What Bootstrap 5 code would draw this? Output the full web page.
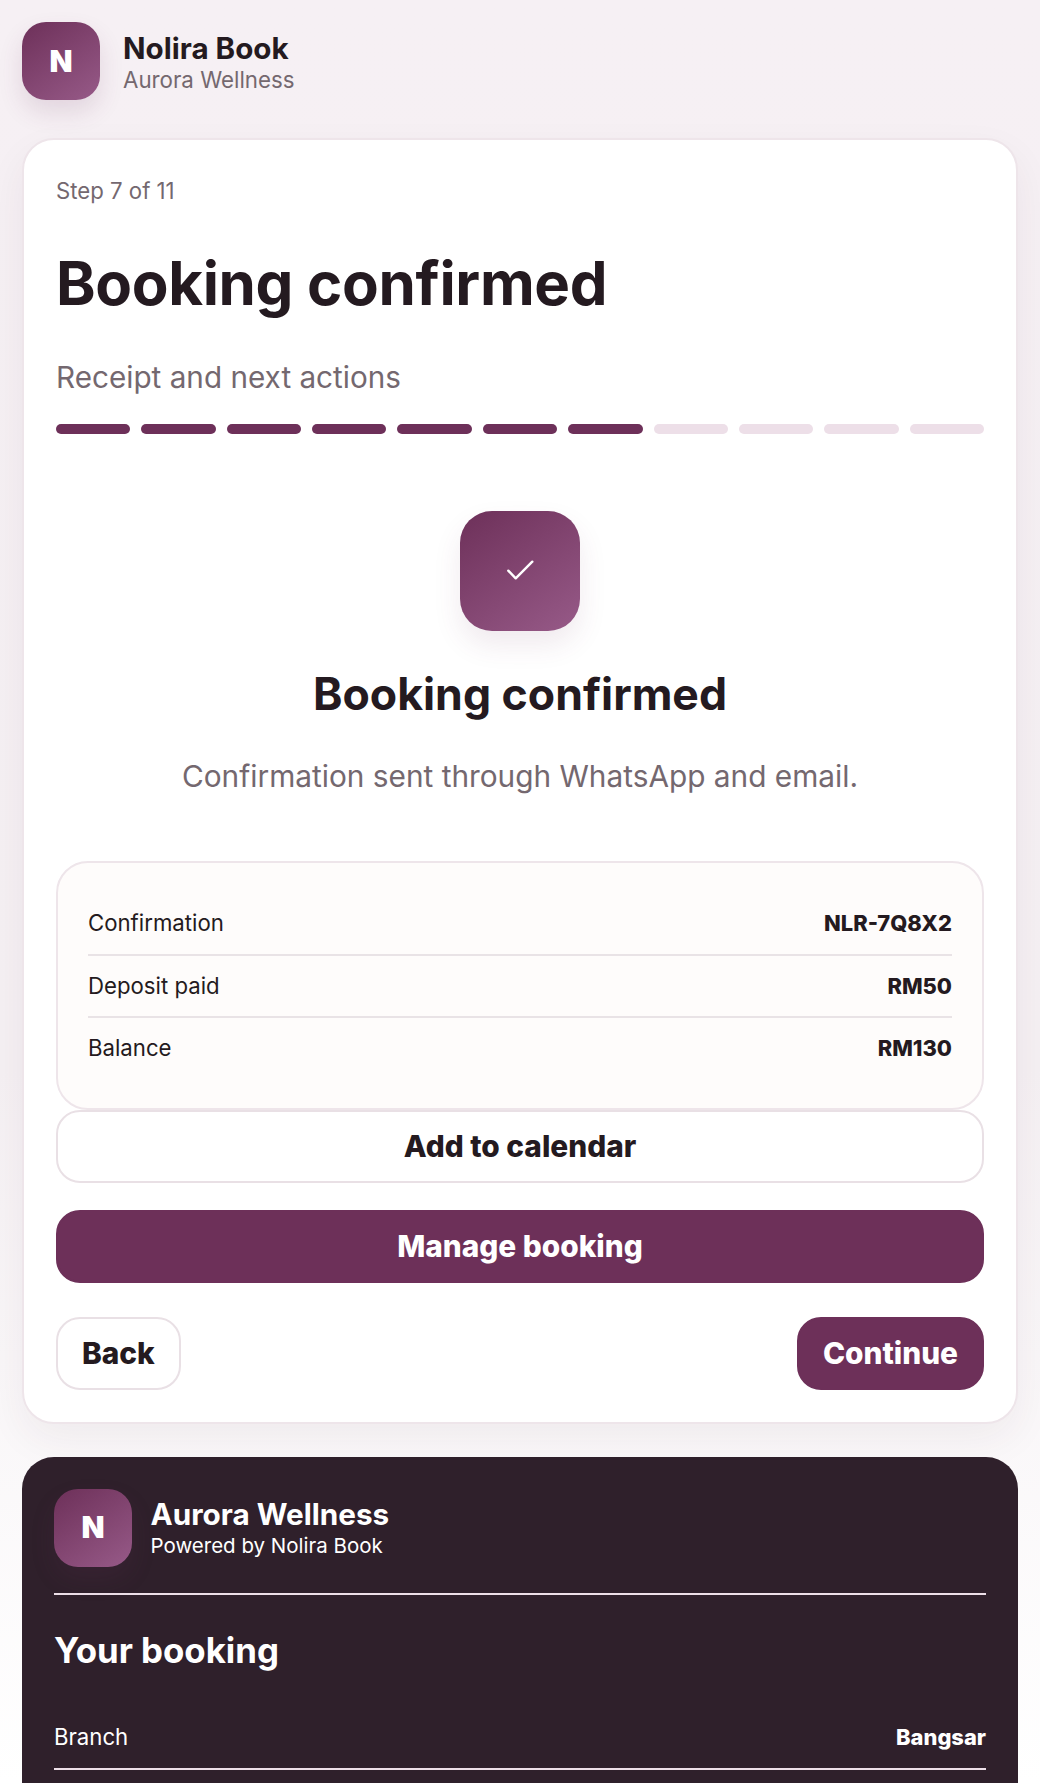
<!DOCTYPE html>
<html lang="en">
<head>
    <meta charset="UTF-8">
    <meta name="viewport" content="width=device-width, initial-scale=1.0">
    <title>Nolira Book - Booking confirmed</title>
    <link href="https://cdn.jsdelivr.net/npm/bootstrap@5.3.0/dist/css/bootstrap.min.css" rel="stylesheet">
    <style>
        html, body {
            height: 1783px;
            overflow: hidden;
        }
        body {
            font-family: Inter, "Liberation Sans", sans-serif;
            color: #241a20;
            background: linear-gradient(180deg, #f6f0f4 0%, #f5f0f3 60%, #ffffff 100%);
        }
        .page-wrap {
            padding: 22px 22px 0;
        }
        .brand-logo {
            width: 78px;
            height: 78px;
            border-radius: 24px;
            background: linear-gradient(145deg, #6d3059, #975a88);
            color: #fff;
            font-size: 30px;
            font-weight: 900;
            box-shadow: 0 12px 24px rgba(109, 48, 89, .14);
            flex-shrink: 0;
        }
        .brand-head {
            gap: 23px;
            margin-bottom: 38px;
        }
        .brand-name {
            font-size: 29.6px;
            font-weight: 700;
            line-height: 36px;
            padding-top: 1px;
        }
        .brand-sub {
            font-size: 22.3px;
            line-height: 28px;
            color: #74686f;
        }
        .main-panel {
            padding: 32px;
            background: #fff;
            border: 2px solid #eee5ea;
            border-radius: 32px;
            box-shadow: 0 16px 40px rgba(60, 30, 50, .06);
        }
        .step-label {
            font-size: 22.2px;
            line-height: 38px;
            color: #74686f;
            margin-bottom: 37px;
        }
        .page-title {
            font-size: 60px;
            font-weight: 700;
            line-height: 72px;
            letter-spacing: -.35px;
            margin-bottom: 39px;
        }
        .page-sub {
            font-size: 29.7px;
            line-height: 38px;
            color: #74686f;
            margin-bottom: 28px;
        }
        .seg-row {
            gap: 11px;
            margin-bottom: 77px;
        }
        .seg {
            flex: 1;
            height: 10px;
            border-radius: 5px;
            background: #eddfe8;
        }
        .seg-on {
            background: #6d3059;
        }
        .tick-box {
            width: 120px;
            height: 120px;
            border-radius: 32px;
            background: linear-gradient(145deg, #6d3059, #975a88);
            box-shadow: 0 14px 28px rgba(109, 48, 89, .1);
            margin-bottom: 36px;
        }
        .done-title {
            font-size: 44.6px;
            font-weight: 700;
            line-height: 54px;
            margin-bottom: 35px;
        }
        .done-text {
            font-size: 29.8px;
            line-height: 40px;
            color: #74686f;
            margin-bottom: 65px;
        }
        .summary-box {
            padding: 30px 30px 29px;
            background: #fefcfb;
            border: 2px solid #eee5ea;
            border-radius: 32px;
        }
        .sum-row {
            font-size: 22.2px;
            line-height: 30.5px;
            padding: 15px 0;
            border-bottom: 2px solid #e9e3e6;
        }
        .sum-row:last-child {
            border-bottom: 0;
        }
        .sum-row b, .dark-row b {
            font-weight: 800;
            font-size: 21.9px;
        }
        .act-btn {
            font-size: 29.8px;
            font-weight: 800;
            line-height: 38px;
            padding: 15.5px 24px;
            border-radius: 24px;
        }
        .act-light {
            background: #fff;
            border: 2px solid #e9e0e5;
            color: #241a20;
        }
        .act-dark {
            background: #6d3059;
            border: 2px solid #6d3059;
            color: #fff;
        }
        .act-dark:hover {
            background: #5d284c;
            border-color: #5d284c;
            color: #fff;
        }
        .gap-manage {
            margin-top: 27px;
        }
        .foot-btns {
            margin-top: 34px;
        }
        .dark-panel {
            margin-top: 33px;
            padding: 32px;
            height: 400px;
            background: #2f202b;
            color: #fff;
            border-radius: 32px;
        }
        .dark-head {
            gap: 18.5px;
            padding-bottom: 26px;
            border-bottom: 2px solid #eddfe8;
            margin-bottom: 28px;
        }
        .dark-name {
            font-size: 29.7px;
            font-weight: 700;
            line-height: 36px;
        }
        .dark-sub {
            font-size: 20.5px;
            line-height: 27px;
        }
        .dark-title {
            font-size: 34.8px;
            font-weight: 700;
            line-height: 54px;
            margin-bottom: 45px;
        }
        .dark-row {
            font-size: 22.2px;
            line-height: 30px;
            padding-bottom: 16px;
            border-bottom: 2px solid #eddfe8;
        }
    </style>
</head>
<body>

<div class="page-wrap">
    <header class="d-flex align-items-center brand-head">
        <div class="brand-logo d-flex align-items-center justify-content-center">N</div>
        <div>
            <div class="brand-name">Nolira Book</div>
            <div class="brand-sub">Aurora Wellness</div>
        </div>
    </header>

    <main class="main-panel">
        <div class="step-label">Step 7 of 11</div>
        <h1 class="page-title">Booking confirmed</h1>
        <p class="page-sub">Receipt and next actions</p>

        <div class="d-flex seg-row">
            <div class="seg seg-on"></div>
            <div class="seg seg-on"></div>
            <div class="seg seg-on"></div>
            <div class="seg seg-on"></div>
            <div class="seg seg-on"></div>
            <div class="seg seg-on"></div>
            <div class="seg seg-on"></div>
            <div class="seg"></div>
            <div class="seg"></div>
            <div class="seg"></div>
            <div class="seg"></div>
        </div>

        <div class="text-center">
            <div class="tick-box d-flex align-items-center justify-content-center mx-auto">
                <svg width="28" height="28" viewBox="0 0 28 28" fill="none" stroke="#fff" stroke-width="2.4" stroke-linecap="round" stroke-linejoin="round">
                    <path d="M2.3 13.7l7.4 7.6L26.3 4.7"/>
                </svg>
            </div>
            <h2 class="done-title">Booking confirmed</h2>
            <p class="done-text">Confirmation sent through WhatsApp and email.</p>
        </div>

        <div class="summary-box">
            <div class="sum-row d-flex justify-content-between align-items-center"><span>Confirmation</span><b>NLR-7Q8X2</b></div>
            <div class="sum-row d-flex justify-content-between align-items-center"><span>Deposit paid</span><b>RM50</b></div>
            <div class="sum-row d-flex justify-content-between align-items-center"><span>Balance</span><b>RM130</b></div>
        </div>

        <button class="btn act-btn act-light w-100 d-block">Add to calendar</button>
        <button class="btn act-btn act-dark w-100 d-block gap-manage">Manage booking</button>

        <div class="d-flex justify-content-between foot-btns">
            <button class="btn act-btn act-light">Back</button>
            <button class="btn act-btn act-dark">Continue</button>
        </div>
    </main>

    <section class="dark-panel">
        <div class="d-flex align-items-center dark-head">
            <div class="brand-logo d-flex align-items-center justify-content-center">N</div>
            <div>
                <div class="dark-name">Aurora Wellness</div>
                <div class="dark-sub">Powered by Nolira Book</div>
            </div>
        </div>
        <h3 class="dark-title">Your booking</h3>
        <div class="dark-row d-flex justify-content-between align-items-center"><span>Branch</span><b>Bangsar</b></div>
    </section>
</div>

<script src="https://cdn.jsdelivr.net/npm/bootstrap@5.3.0/dist/js/bootstrap.bundle.min.js"></script>
</body>
</html>
